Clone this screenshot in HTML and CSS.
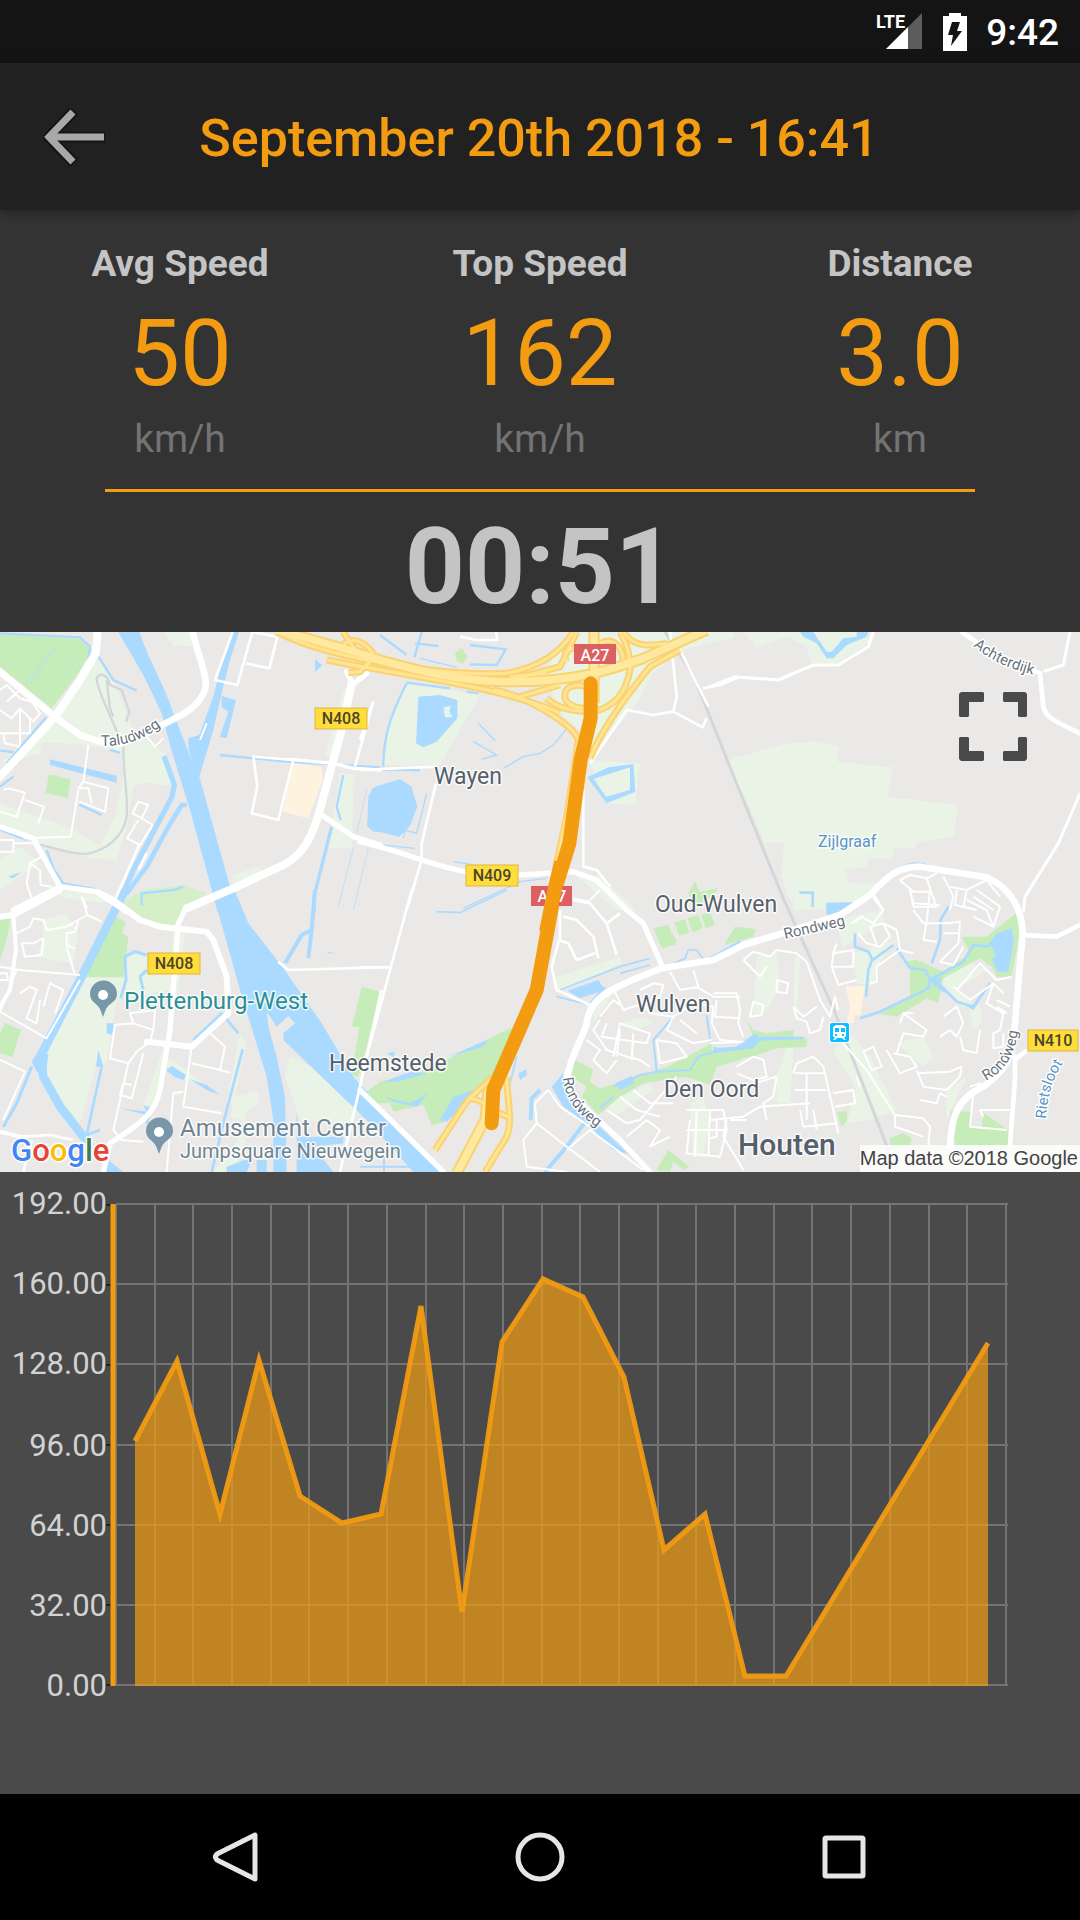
FILE: index.html
```html
<!DOCTYPE html>
<html lang="en">
<head>
<meta charset="utf-8">
<meta name="viewport" content="width=device-width, initial-scale=1">
<title>September 20th 2018 - 16:41</title>
<link rel="stylesheet" href="styles.css">
</head>
<body>
<div class="status-bar">
  <svg class="signal" viewBox="0 0 48 40" role="img" aria-label="LTE signal">
    <path d="M47 1V37H11Z" fill="#5c5c5c"/>
    <path d="M33 15V37H11Z" fill="#fff"/>
    <text class="lte" x="1" y="16">LTE</text>
  </svg>
  <svg class="battery" viewBox="0 0 24 38" role="img" aria-label="Battery charging">
    <path d="M0 3H6V0H18V3H24V38H0Z" fill="#fff"/>
    <path d="M9 9H17L14 18H19L8 33L10 22H5Z" fill="#141414"/>
  </svg>
  <span class="clock">9:42</span>
</div>

<header class="app-bar">
  <button class="back" type="button" aria-label="Back">
    <svg viewBox="0 0 64 64">
      <path d="M31 6L6 32L31 58M7 32H62" fill="none" stroke="#151515" stroke-width="11"/>
      <path d="M30 7L6 32L30 57M7 32H61" fill="none" stroke="#a8a8a8" stroke-width="7"/>
    </svg>
  </button>
  <h1 class="title">September 20th 2018 - 16:41</h1>
</header>

<main class="content">
  <section class="summary">
    <dl class="stats">
      <div class="stat"><dt>Avg Speed</dt><dd class="value">50</dd><dd class="unit">km/h</dd></div>
      <div class="stat"><dt>Top Speed</dt><dd class="value">162</dd><dd class="unit">km/h</dd></div>
      <div class="stat"><dt>Distance</dt><dd class="value">3.0</dd><dd class="unit">km</dd></div>
    </dl>
    <hr class="divider">
    <p class="duration">00:51</p>
  </section>

  <section class="map" aria-label="Route map">
    <svg class="map-canvas" viewBox="0 0 1080 540">
      <defs>
        <path id="p-talud" d="M101 114Q136 115 164 92"/>
        <path id="p-achter" d="M973 14Q998 35 1038 44"/>
        <path id="p-rond1" d="M785 307L850 292"/>
        <path id="p-rond2" d="M563 446C565 466 575 482 604 500"/>
        <path id="p-rond3" d="M986 449C1006 438 1018 422 1019 384"/>
        <path id="p-riet" d="M1046 487C1048 460 1052 444 1070 422"/>
        <g id="ramps" transform="translate(1080 -6)">
          <path d="M-250 6C-60 100 300 140 440 130C540 110 600 70 640 6"/>
          <path d="M-100 90C50 120 250 150 380 180C480 205 560 230 600 250"/>
          <path d="M-50 6C-30 40 -20 60 30 95L0 125L-35 128M-60 60C-40 20 0 20 40 70"/>
          <path d="M400 180C480 190 640 280 655 330L620 560L590 700"/>
          <path d="M450 150L600 110C640 30 640 30 650 6M620 95C600 60 640 40 690 70M480 200L600 165"/>
          <path d="M680 235C640 235 610 220 615 190C620 160 670 160 690 180M560 205C600 240 650 245 700 245C770 230 800 180 810 120C810 70 800 40 780 6M720 40C760 20 790 50 790 100L770 120"/>
          <path d="M690 385C720 310 780 220 870 110L960 60M790 6C820 50 860 50 920 40M450 140L560 130"/>
          <path d="M225 1560L320 1415C360 1375 390 1350 410 1335M375 1626L440 1520C460 1470 440 1400 440 1340M325 1405C370 1405 400 1450 445 1460"/>
        </g>
        <path id="motorway" transform="translate(1080 -6)" d="M-250 0C-100 40 0 70 60 90C200 130 320 155 450 155C650 155 750 120 850 85L1040 0M702 0V220M290 1630L375 1470L385 1380"/>
      </defs>

      <svg x="0" y="0" width="1080" height="540" viewBox="0 0 3240 1620">
        <!-- open green land -->
        <g class="lawn">
          <g transform="translate(0 -6)">
            <path d="M290 80L345 160L400 300L500 375L520 470L435 455L400 470L380 590L350 690L270 685L110 640L0 580V520L210 595L300 645L345 560L370 440L365 365L260 345L130 335L120 372L0 400L160 270Z"/>
            <path d="M490 6H578L582 48H520Z"/>
            <path d="M1030 180H1045L1000 380H975Z"/>
            <path d="M1020 430L1062 432L1055 655L985 655Z"/>
            <path d="M690 760L700 735L780 708L790 730Z"/>
            <path d="M180 780L270 790L340 810L300 820L180 800Z"/>
            <path d="M0 690L60 650L120 700L0 780Z"/>
          </g>
          <g transform="translate(0 774)">
            <path d="M245 262H360L370 200L440 185L440 250L520 250L510 300L350 330L320 520L290 520L240 700L130 560L140 500Z"/>
            <path d="M130 90L195 70L235 120L220 220L110 200L130 150Z"/>
            <path d="M520 120H555L540 260L490 560L450 650L430 650L500 440Z"/>
            <path d="M870 500L1000 560L1080 640L1060 700L900 690L855 560Z"/>
            <path d="M720 430L740 460L700 640L680 640Z"/>
            <path d="M705 620L775 600V640L740 660L720 740L640 846H700L760 700L690 680Z"/>
            <path d="M495 500L560 540L620 590L560 570L500 530Z"/>
          </g>
          <g transform="translate(1080 -6)">
            <path d="M140 160L360 195L240 405H70L90 280Z"/>
            <path d="M560 110L640 6H1110V25L960 60L880 130L830 220L700 380L660 300L590 240Z"/>
            <path d="M685 390L840 400L825 525L740 520Z"/>
            <path d="M1105 390L1140 375V480Z"/>
            <path d="M640 730L720 740L830 840H770Z"/>
          </g>
          <g transform="translate(1080 774)">
            <path d="M580 265L780 200L785 220L640 290L590 300Z"/>
            <path d="M790 400L850 380L880 400L830 420Z"/>
            <path d="M700 360L740 300L760 310L700 400Z"/>
            <path d="M990 640L1030 620L1050 700L1030 800H1000Z"/>
            <path d="M740 640L870 580L880 600L760 680Z"/>
          </g>
          <g transform="translate(2130 -6)">
            <path d="M56 390L220 342L310 335L387 350L382 395L548 412L532 500L742 525L733 622L618 635L616 655H553L545 686H475L472 712L405 718L415 760H510L420 810L240 810L215 740L222 640L165 640Z"/>
            <path d="M100 6H490L470 45L380 100H305L290 50L230 20L140 52Z"/>
            <path d="M0 6H70V25H0Z"/>
          </g>
          <g transform="translate(2130 774)">
            <path d="M250 0H480L400 60L250 60Z"/>
            <path d="M420 430L480 500L560 660L480 690L410 700L440 600L370 480Z"/>
            <path d="M140 200L200 190L210 290L170 360L130 380Z"/>
            <path d="M430 190L560 150L500 230L490 290L440 280Z"/>
            <path d="M200 560L230 470L250 470L240 640H200Z"/>
            <path d="M560 460L640 440L670 500L640 530Z"/>
            <path d="M690 270L760 210L830 240L740 300L790 350L760 350Z"/>
            <path d="M255 200H270L262 370L250 370Z"/>
            <path d="M780 360L810 340L815 400L790 420Z"/>
            <path d="M380 100L430 75L520 60L520 100L400 170Z"/>
            <path d="M710 600L770 560L710 690Z"/>
          </g>
        </g>

        <!-- parks -->
        <g class="park">
          <g transform="translate(0 -6)">
            <path d="M0 10L240 28L275 60L235 130L155 235L0 110Z"/>
            <path d="M147 433L212 448L203 504L136 488Z"/>
          </g>
          <g transform="translate(0 774)">
            <path class="pale" d="M360 40L430 0L550 -15L620 10L560 50L530 110L450 100Z"/>
            <path d="M345 80L378 95L365 130L385 140L370 262H245Z"/>
            <path d="M0 85H32L20 150L0 210Z"/>
            <path d="M15 398L63 420L37 502L0 490V430Z"/>
            <path d="M1085 290L1144 305L1075 560L1055 555L1078 410H1055Z"/>
          </g>
          <g transform="translate(1080 -6)">
            <path d="M285 70L305 55L322 78L308 102L290 92Z"/>
            <path d="M985 790L1005 752L1020 785L1075 775L1055 800L1000 830Z"/>
          </g>
          <g transform="translate(1080 774)">
            <path d="M20 605L60 575L200 540L450 415L480 410L420 560L360 590L260 690L245 700L215 705L190 645L100 665L90 640L50 640Z"/>
            <path d="M645 510L700 540L690 575L720 595L800 570L920 530L1000 490L1055 460V480L1140 490V510L1070 530L1050 585L980 560L850 580L780 620L715 675L665 620L680 590L635 560Z"/>
            <path d="M880 115L925 105L935 130L950 150L945 165L905 175Z"/>
            <path d="M943 98L975 88L988 128L958 138ZM983 85L1015 75L1028 115L998 128ZM1022 75L1050 65L1064 105L1038 115Z"/>
            <path d="M1095 165L1130 110L1160 115L1186 120L1180 140Z"/>
            <path d="M890 840L925 780L988 830L970 840L940 815L930 845Z"/>
          </g>
          <g transform="translate(2130 774)">
            <path d="M0 500L60 480L130 440L110 390L130 420L165 430L250 420L250 440L290 445V470L200 475L130 500L0 520Z"/>
            <path d="M45 160L75 110L138 118L130 138Z"/>
            <path d="M755 140L830 140L918 70L930 130L905 260H860L845 230L810 205L700 265L685 340L650 325L560 380L510 372L600 320L600 240L585 215L620 210L700 245L780 190Z"/>
            <path d="M722 662L785 665L783 710L815 715L820 670L815 665L895 720V766H740L722 735Z"/>
            <path d="M540 745L580 728L605 745L600 766H540Z"/>
            <path d="M380 668L410 662L412 690L395 710Z"/>
          </g>
        </g>

        <g class="sand">
          <path transform="translate(0 -6)" d="M880 398L965 412L968 450L925 565L848 545Z"/>
          <path transform="translate(2130 774)" d="M407 290L465 288L452 375L432 375V400H410L420 350Z"/>
        </g>

        <!-- water -->
        <g class="water">
          <g transform="translate(0 -6)">
            <path d="M355 6H418C450 100 500 180 520 250L575 390L598 440L690 770L728 845H652L630 760L570 540L545 460L510 345L485 250L430 135Z"/>
            <path d="M698 6H717L690 90L665 190L640 300L610 400L598 440L575 390L565 350L600 310L640 200L665 100Z"/>
            <path d="M665 198L708 210L680 325L660 320L685 245L665 230ZM565 325L600 315L590 345L565 345Z"/>
            <path d="M945 88L967 106L945 126Z"/>
            <path d="M150 388L350 437V458L150 405Z"/>
            <path d="M1105 500L1118 475L1140 470V605L1120 605L1102 588Z"/>
            <path d="M25 740L65 725L40 745Z"/>
          </g>
          <g transform="translate(0 774)">
            <path d="M636 0H704L745 100L850 235L965 400L1060 560L1320 846H1240L1110 700L850 450V430L885 400L865 378L830 410L800 365L805 410L830 500L855 620L860 846H820V690L800 560L720 300Z"/>
            <path d="M95 515L120 475L145 495L138 550L110 545Z"/>
            <path d="M320 400H345L335 435L320 430ZM295 480L310 530H288Z"/>
            <path d="M498 540L515 528L558 555L550 570L525 562ZM570 568L620 585L660 615L620 600Z"/>
            <path d="M320 806L370 846H310ZM890 670L900 740L1030 740V760L940 770L1000 846H890ZM680 830L760 800L740 846H680ZM770 810H800V846H770Z"/>
            <path d="M360 655L440 665L430 645L455 655L440 675Z"/>
            <path d="M980 185L1010 190L985 190Z"/>
          </g>
          <g transform="translate(1080 -6)">
            <path fill-rule="evenodd" d="M175 200L240 195L292 210V265L230 335L190 352L168 340ZM250 232L272 228L268 245L278 262L255 262Z"/>
            <path d="M28 500L45 470L120 448L155 470L172 530L150 588L118 620L35 600L22 585Z"/>
            <path fill-rule="evenodd" d="M682 442L745 412L820 402L826 485L740 520ZM700 447L738 500L810 480V412Z"/>
          </g>
          <g transform="translate(1080 774)">
            <path d="M622 302L715 270L735 300L660 325Z"/>
            <path d="M765 580L815 558L822 580L780 600Z"/>
            <path d="M575 590L610 550L650 650L730 720L805 792L760 780L690 710L610 650Z"/>
            <path d="M475 550L500 538V555L480 570Z"/>
            <path d="M265 500L385 448L370 470ZM70 575L150 545L200 552L110 575ZM75 620L150 640L205 610L170 650L100 635ZM240 690L280 620L370 590L260 695Z"/>
            <path d="M1060 470L1110 480L1065 490Z"/>
            <path d="M80 490L105 485L100 502Z"/>
          </g>
          <g transform="translate(2130 774)">
            <path d="M348 38L460 35L390 75H350Z"/>
            <path d="M838 160L860 130L905 115L912 150L895 245L862 245L845 205L860 200Z"/>
            <path d="M10 475L80 470L135 430L145 440L280 440V448L150 452L130 475L10 490ZM755 340L785 345L808 335L790 360Z"/>
            <path d="M655 270L695 262L690 280L730 320L690 300Z"/>
          </g>
          <path transform="translate(2130 -6)" d="M270 6H310L350 65H365L400 25L440 20V6H475L470 20L410 45L370 85H350L320 40L280 20Z"/>
        </g>

        <!-- canals and ditches -->
        <g class="stream">
          <g transform="translate(0 -6)">
            <path stroke-width="16" d="M492 378L523 465L516 500L400 720L345 845"/>
            <path stroke-width="14" d="M560 525H545L505 590L440 710L380 790"/>
            <path stroke-width="7" d="M0 10L240 22L270 50L265 90M295 80L340 150L410 182M138 262L20 400M0 362L40 366M0 470L40 440M330 360L360 368M238 524L305 555M140 660L160 715L190 760L290 778M425 825V790L520 780L550 770M660 375L860 395L1140 412M1030 435L1010 530L1022 570"/>
            <path stroke-width="10" d="M995 590L942 800V845"/>
            <path stroke-width="2" d="M75 160L155 60M90 160L180 40M205 95L235 125M1060 655L1015 830M1105 655L1060 840M1100 480L1070 610"/>
            <path stroke-width="6" d="M0 600L80 630"/>
          </g>
          <g transform="translate(0 774)">
            <path stroke-width="26" d="M375 0L345 60L240 270L120 500L130 560L180 650L250 740L265 750"/>
            <path stroke-width="9" d="M95 530L50 640L10 710M375 200L405 185L440 195M375 200L378 270L362 325M440 240L420 260L430 300"/>
            <path stroke-width="12" d="M945 0L935 120L905 135L855 220M935 120L925 205"/>
            <path stroke-width="8" d="M580 450L665 370L715 430M728 478L675 680L635 846M305 530L260 735L300 720M440 700L455 650"/>
          </g>
          <g transform="translate(1080 -6)">
            <path stroke-width="7" d="M60 15L140 75M185 6L163 82M165 40L235 48M330 103L410 105L437 58L330 45M140 158L270 175M320 185L355 190M140 160C90 260 70 320 70 410M0 418L180 420"/>
            <path stroke-width="4" d="M355 280L405 332M340 335L410 375L365 388M430 415L490 380L540 370L580 345L625 290M180 85L290 112M200 490L170 610L135 600L130 625M20 640L165 655M280 695L330 702M310 835L480 755L560 745"/>
          </g>
          <g transform="translate(1080 774)">
            <path stroke-width="5" d="M230 65L300 68L440 0M470 500L440 620M590 320L690 345M600 300L780 230L870 205M780 250L870 225M930 225L975 205L985 180H1010L1030 208M735 290L690 340M690 390L620 530"/>
            <path stroke-width="6" d="M940 380L880 450L890 545L840 555L760 590M890 545L990 540L1015 500L1080 480M1040 375L1052 460M720 655L760 620M0 830H160M72 800V846"/>
            <path stroke-width="12" d="M540 600L515 625L512 690M680 690L620 770L555 846"/>
          </g>
          <g transform="translate(2130 774)">
            <path stroke-width="8" d="M435 130V170L475 185L488 210L550 165M488 205L475 240L468 320M715 50L692 90L690 150L665 220M560 175L600 235L645 240L660 270L760 215L790 165L830 170L900 120M660 270L655 295L510 365L450 385M695 290L740 335L790 350L840 280M268 8H308V50M0 205L90 155"/>
          </g>
          <path transform="translate(2130 -6)" stroke-width="9" d="M480 790L550 725C590 700 620 695 660 710"/>
        </g>

        <!-- railway -->
        <g class="rail">
          <path transform="translate(0 -6)" d="M357 320C330 250 290 180 290 145C300 125 325 135 330 165L365 180L388 245L378 275M320 150L330 235L340 260M370 350C370 440 385 500 380 560C370 620 320 660 260 672C200 672 160 650 100 640"/>
          <path stroke-width="9" d="M1995 0L2080 130L2220 480L2350 800L2500 1130L2660 1540L2690 1620"/>
        </g>

        <!-- local streets -->
        <g class="street">
          <g transform="translate(0 -6)">
            <path d="M0 180L20 165L60 205L95 215L120 250L100 275L60 235L35 265L0 240M20 215L60 180M60 235V345M90 265V310H0M10 310L15 340L60 350M265 345L250 455L235 475H265L275 520M250 455L325 475L315 545L238 515M235 480L212 620M10 480L25 475L75 488L50 560L0 545M75 510L132 530L115 580M415 515L445 525L425 565L398 550ZM425 565L458 585L420 645L382 625L415 570M440 320L465 350L490 325M620 280L600 330M0 630H40V665H0M40 640L100 640L125 680L90 700L80 760L100 820M90 700L120 720L122 765L155 770"/>
            <path stroke-width="8" d="M698 6L645 150L712 165L757 6L832 20L808 115L738 100M880 390L835 570L755 550L772 470L760 380L880 390M1120 215L1065 410M420 640L345 810M415 720L440 670"/>
            <path d="M70 625L210 620M245 800L262 835"/>
          </g>
          <g transform="translate(0 774)">
            <path d="M48 130L90 110L100 85L130 90L140 120L200 110L235 90L262 75M235 95L225 125L200 130V165L225 175M200 170L225 255M65 160H100L130 145L125 195L75 200ZM0 230L60 240L240 255M50 240L0 365L140 445L240 270M60 310L90 290L110 300L80 385L110 400L120 330M130 350L150 280L190 300L165 370M245 20L262 75L305 95M0 510L75 545L10 690M0 250H20L25 270H0"/>
            <path d="M340 405L400 400L460 420L450 455L410 485L385 520L330 505L345 405M400 400L390 370L465 360L460 420M450 455H500M430 490L395 625L360 615L370 580L395 585M385 520L340 720L365 750L430 755M630 430L675 470L660 540L690 548M575 520L660 540M575 470L550 650L665 670M550 605L520 610L500 846"/>
            <path stroke-width="8" d="M835 215L865 240L1140 232M1144 300L1080 590L1020 846M0 725L60 740L150 735L220 750M95 750L70 846"/>
          </g>
          <g transform="translate(1080 -6)">
            <path stroke-width="8" d="M228 410L0 420M228 460L185 640V690L140 840M670 480V710L710 720L750 770M350 30H412L408 6M300 20L350 30M40 215L0 330M690 400L800 240L880 255L940 245L1028 292L1040 265M930 6L950 200L940 245M960 60L1045 230M1028 175L1080 165L1140 140"/>
            <path d="M640 805L685 815L720 780M670 480L665 350"/>
          </g>
          <g transform="translate(1080 774)">
            <path stroke-width="8" d="M155 0L20 500L0 590M0 232H90M600 60V140L575 230L590 300L690 345M610 80L650 90L700 140L715 205M595 150L625 160L650 210L705 190M640 30L690 40L740 100L770 195M740 100L780 70"/>
            <path d="M765 305L790 360L850 340M720 380L760 330L780 345M840 300L880 280L910 285L900 320L850 340L870 370L940 380L1000 340M720 390L700 420L740 480L800 500L840 510L870 530M740 400L725 440L860 460L870 430L780 400L760 500M680 450L720 480L700 510L740 550L770 510M780 420L770 500M820 430L815 510M940 380L920 420L1000 460L1055 450M960 390L1010 430M890 450L900 520L980 500L950 460L890 450M1000 340L1060 350L1055 400L1080 450L1140 455M930 245L960 300L1015 290L1000 240M1010 290L1060 320H1140M740 660L800 700L840 690L950 560M780 620L830 660L900 680M820 600L870 640L940 640M800 740L860 690L900 720L870 770L930 740M980 660H1090L1100 720L1080 800L980 790L990 690M1010 660L1005 800M1050 660L1045 800M980 720H1100M1110 690L1160 690M565 600L525 640L530 700L490 750L500 830L620 846M565 600L600 650L690 710M620 770L530 700M620 770L720 846M620 780L690 720L850 840"/>
          </g>
          <g transform="translate(2130 -6)">
            <path stroke-width="9" d="M0 170L75 140L205 150L310 105H385L475 50L490 6M1080 6L1060 105L1000 125M1110 490L1080 560L1045 640L945 800L940 845M490 800L520 840"/>
            <path d="M570 750L600 735L650 745L665 790L680 830M570 750L610 785H660M600 780L610 830H680M650 745L680 730M700 740L730 800L720 840M720 770L770 780L830 750M770 780L760 830M790 800L850 840M830 750L870 800"/>
          </g>
          <g transform="translate(2130 774)">
            <path d="M600 0L610 40L690 45M660 0L650 95M610 60L640 100H715L750 95L745 160L690 215L730 225L760 170M700 130H750M650 95L640 150L680 155M770 30L830 60L850 110M800 0L870 50L850 110L790 80M740 0L735 45L800 60M425 100L455 80L490 100L520 60L490 10M445 130L470 160L510 170L540 140L520 100L480 110L500 165M520 100L560 120L570 180L610 190M570 180L500 230V275L480 280M370 190L430 180V230L365 230ZM365 230L385 285L440 270M380 160L370 190M100 210L130 185L180 200L200 180L260 190L290 215L330 330L360 380L375 320L385 360M100 210L130 240L150 260L170 230M200 270L235 280L230 310L200 305ZM10 310L80 310L90 360L85 400L100 440M20 330L15 380L90 385M130 335L160 345L155 375L120 380ZM0 460L100 455M250 350L280 380L320 350M250 350L260 385L290 395L300 430L330 420L340 380"/>
            <path d="M80 530L130 500L160 510L170 560L130 570L80 550M100 590L200 560M0 690L100 680L150 650L300 640M20 690V740L0 745M50 690L40 740L100 840M250 550L260 520L310 500L340 530L365 640L385 730M255 550H340M255 600H350M290 550V690M370 610L430 600L435 640L375 650M200 560L190 620L160 640L170 690M270 660L280 710L380 700M310 660L320 720M450 590L440 560"/>
            <path d="M460 485L490 470L515 530L485 540ZM400 460L470 540L520 620L555 675L640 685L660 710L655 766M555 675V710L640 740M530 480L570 550L620 530L600 500L550 490M560 490L580 430L640 440L650 420L580 370L570 400M580 370L610 370M620 540L640 590L710 600L750 560L755 530L720 545L620 550M700 380L740 350L760 400L740 440L720 420L690 440M750 440L760 480L800 490L810 420M740 300L810 220L860 270L905 260M730 290L780 330L850 280L880 310M850 280L830 340L880 370L870 420L850 430V475L880 470V430M860 330L900 350M860 350L890 370M790 610L780 710L890 720M790 610L810 580L780 590M820 680L810 660H900M630 630L680 640L690 610L710 620"/>
          </g>
        </g>

        <!-- main roads -->
        <g class="road">
          <g transform="translate(0 -6)">
            <path stroke-width="24" d="M293 6L287 70L240 150L165 260L0 440"/>
            <path stroke-width="20" d="M0 125L170 265L240 315L300 335L360 340L440 310L530 262C590 235 620 190 617 155C612 110 590 60 578 6"/>
            <path stroke-width="24" d="M1055 160L1030 280L965 520C940 620 910 670 860 700L700 775L560 835"/>
            <path stroke-width="16" d="M1040 125L1058 165L1100 130M965 555L1060 620L1140 645M0 590L100 625L180 770L290 785L380 845M180 770L40 840"/>
            <path stroke-width="10" d="M870 388L1000 400L1060 415L1140 420"/>
          </g>
          <g transform="translate(0 774)">
            <path stroke-width="18" d="M0 80L40 75L180 0M290 5L340 30L420 90L480 110L620 125L640 150L680 260L685 370L575 470L440 455"/>
            <path stroke-width="16" d="M560 50L535 100L510 420L480 600C460 680 420 700 330 760L310 846"/>
            <path stroke-width="12" d="M40 75L48 180L30 300L0 350M0 725L60 740"/>
          </g>
          <path transform="translate(1080 -6)" stroke-width="16" d="M0 635C150 670 240 720 400 740L640 725L710 750L800 840L850 880L905 1005"/>
          <path transform="translate(1080 774)" stroke-width="20" d="M620 560C640 480 670 440 680 400C690 330 730 300 905 235L1060 210L1150 165L1350 105L1440 75L1530 15C1590 -50 1620 -70 1680 -70L1880 -38C1940 -10 1985 40 1988 130L1965 400C1960 500 1940 540 1870 590C1780 630 1775 700 1770 766"/>
          <path transform="translate(1080 774)" stroke-width="16" d="M620 560L640 620L780 750L870 846M0 600L250 846"/>
          <g transform="translate(2130 774)">
            <path stroke-width="14" d="M935 135L1040 140L1110 105M915 500V570L900 766M945 485L915 510"/>
          </g>
          <path transform="translate(2130 -6)" stroke-width="14" d="M755 6L850 70L990 130L1000 230C1010 270 1050 280 1110 310"/>
        </g>

        <!-- motorways: casing first, then the filling -->
        <use class="ramp-casing" href="#ramps"/>
        <use class="motorway-casing" href="#motorway"/>
        <use class="ramp" href="#ramps"/>
        <use class="motorway" href="#motorway"/>

        <path class="route" d="M1772 154V259L1742 384L1708 634L1665 774L1610 1074L1480 1374L1475 1474"/>
      </svg>

      <!-- road number shields -->
      <g class="shield">
        <rect x="315" y="76" width="52" height="21"/><text x="341" y="92">N408</text>
        <rect x="466" y="233" width="52" height="21"/><text x="492" y="249">N409</text>
        <rect x="148" y="321" width="52" height="21"/><text x="174" y="337">N408</text>
        <rect x="1028" y="398" width="50" height="21"/><text x="1053" y="414">N410</text>
      </g>
      <g class="shield red">
        <rect x="574" y="12" width="42" height="20"/><text x="595" y="29">A27</text>
        <rect x="531" y="254" width="41" height="20"/><text x="552" y="270">A27</text>
      </g>
      <path class="route-top" d="M561 230L555 256L546 300"/>

      <!-- places -->
      <g class="place">
        <text x="434" y="152">Wayen</text>
        <text x="655" y="280">Oud-Wulven</text>
        <text x="636" y="380">Wulven</text>
        <text x="329" y="439">Heemstede</text>
        <text x="664" y="465">Den Oord</text>
      </g>
      <text class="place town" x="738" y="523">Houten</text>
      <text class="place business" x="124" y="377">Plettenburg-West</text>
      <text class="place venue" x="180" y="504">Amusement Center</text>
      <text class="place venue small" x="180" y="526">Jumpsquare Nieuwegein</text>
      <g class="street-name">
        <text><textPath href="#p-talud">Taludweg</textPath></text>
        <text><textPath href="#p-achter">Achterdijk</textPath></text>
        <text><textPath href="#p-rond1">Rondweg</textPath></text>
        <text><textPath href="#p-rond2">Rondweg</textPath></text>
        <text><textPath href="#p-rond3">Rondweg</textPath></text>
        <text class="blue"><textPath href="#p-riet">Rietsloot</textPath></text>
      </g>
      <text class="place blue zijl" x="818" y="215">Zijlgraaf</text>

      <g class="pin">
        <path d="M103 385L100 377C97 371 90 370 90 362A13 13 0 0 1 117 362C117 370 109 371 106 377Z"/><circle cx="103" cy="363" r="5"/>
        <path d="M159 522L156 514C153 508 146 507 146 499A13 13 0 0 1 173 499C173 507 165 508 162 514Z"/><circle cx="159" cy="500" r="5"/>
      </g>
      <g>
        <rect x="829" y="390" width="21" height="21" rx="2" fill="#fff"/>
        <rect x="830" y="391" width="19" height="19" rx="2" fill="#10bdff"/>
        <path fill="#fff" fill-rule="evenodd" d="M836 393H843L846 395V404L844 406L846 408H844L842 406H837L835 408H833L835 406L833 404V395ZM835 396V400H839V396ZM841 396V400H845V396ZM835 402V404H837V402ZM842 402V404H844V402Z"/>
      </g>

      <text class="google" x="11" y="529"><tspan fill="#4285f4">G</tspan><tspan fill="#ea4335">o</tspan><tspan fill="#fbbc05">o</tspan><tspan fill="#4285f4">g</tspan><tspan fill="#3f7d57">l</tspan><tspan fill="#ea4335">e</tspan></text>
      <rect x="860" y="513" width="220" height="27" fill="#fff" fill-opacity=".8"/>
      <text class="attribution" x="1078" y="533">Map data ©2018 Google</text>
    </svg>
    <button class="fullscreen" type="button" aria-label="Show map full screen">
      <svg viewBox="0 0 68 69"><path d="M2 0H24L25 1V9L24 10H10V24L9 25H1L0 24V2ZM45 0H66L68 2V24L67 25H60L59 24V10H45L44 9V1ZM0 46L1 45H9L10 46V59H24L25 60V68L24 69H2L0 67ZM59 46L60 45H67L68 46V67L66 69H45L44 68V60L45 59H59Z"/></svg>
    </button>
  </section>

  <section class="chart" aria-label="Speed over time">
    <svg class="chart-canvas" viewBox="0 0 1080 622">
      <path class="grid" d="M116 32H1008M116 112H1008M116 192H1008M116 273H1008M116 353H1008M116 433H1008M116 513H1008M116 32V514M155 32V514M193 32V514M232 32V514M271 32V514M309 32V514M348 32V514M387 32V514M426 32V514M464 32V514M503 32V514M542 32V514M580 32V514M619 32V514M658 32V514M696 32V514M735 32V514M774 32V514M812 32V514M851 32V514M890 32V514M929 32V514M967 32V514M1006 32V514"/>
      <path class="ticks" d="M106 33H112M106 113H112M106 193H112M106 273H112M106 353H112M106 433H112M106 513H112"/>
      <path class="area" d="M135 269L177 189L220 342L259 188L300 324L342 351L381 342L421 134L462 440L502 170L543 107L583 125L624 205L664 378L705 342L745 504H786L988 171V514H135Z"/>
      <path class="line" d="M135 269L177 189L220 342L259 188L300 324L342 351L381 342L421 134L462 440L502 170L543 107L583 125L624 205L664 378L705 342L745 504H786L988 171"/>
      <path class="axis" d="M113 32V514"/>
      <g class="axis-labels">
        <text x="107" y="42">192.00</text>
        <text x="107" y="122">160.00</text>
        <text x="107" y="202">128.00</text>
        <text x="107" y="284">96.00</text>
        <text x="107" y="364">64.00</text>
        <text x="107" y="444">32.00</text>
        <text x="107" y="524">0.00</text>
      </g>
    </svg>
  </section>
</main>

<nav class="nav-bar" aria-label="System">
  <button type="button" aria-label="Back"><svg viewBox="0 0 54 54"><path d="M46 5V49L8 30Q5 27 8 24Z"/></svg></button>
  <button type="button" aria-label="Home"><svg viewBox="0 0 54 54"><circle cx="27" cy="27" r="22"/></svg></button>
  <button type="button" aria-label="Overview"><svg viewBox="0 0 54 54"><rect x="8" y="8" width="38" height="38" rx="1"/></svg></button>
</nav>
</body>
</html>
```
FILE: styles.css
```css
* {
  box-sizing: border-box;
}

body {
  margin: 0;
  min-height: 100vh;
  display: flex;
  flex-direction: column;
  background: #4a4a4a;
  font-family: Roboto, "Liberation Sans", sans-serif;
}

button {
  margin: 0;
  padding: 0;
  border: 0;
  background: none;
  cursor: pointer;
}

svg {
  display: block;
}

.status-bar {
  display: flex;
  justify-content: flex-end;
  align-items: center;
  height: 63px;
  padding-right: 21px;
  background: #141414;
  color: #fff;
}

.signal {
  width: 48px;
  height: 40px;
}

.lte {
  font: bold 18px "Liberation Sans Narrow", Roboto, sans-serif;
  fill: #fff;
}

.battery {
  width: 24px;
  height: 38px;
  margin: 0 19px 0 20px;
}

.clock {
  padding-top: 3px;
  font-size: 37px;
  font-weight: 500;
  line-height: 44px;
}

.app-bar {
  position: relative;
  display: grid;
  grid-template-columns: 107px 1fr 109px;
  align-items: center;
  height: 147px;
  background: #212121;
  box-shadow: 0 2px 10px rgba(0, 0, 0, .4);
}

.back {
  justify-self: end;
}

.back svg {
  width: 64px;
  height: 64px;
}

.title {
  margin: 0;
  padding-top: 4px;
  font-size: 52px;
  font-weight: 500;
  line-height: 62px;
  text-align: center;
  color: #f39c12;
}

.content {
  flex: 1;
  display: flex;
  flex-direction: column;
}

.summary {
  padding: 32px 0 2px;
  background: #333;
  text-align: center;
}

.stats {
  display: grid;
  grid-template-columns: repeat(3, 1fr);
  margin: 0;
}

.stat dt {
  font-size: 37px;
  font-weight: 700;
  line-height: 44px;
  color: #c4c4c4;
}

.stat dd {
  margin: 0;
}

.stat .value {
  margin-top: 14px;
  font-size: 92px;
  line-height: 108px;
  color: #f39c12;
}

.stat .unit {
  margin-top: 8px;
  font-size: 39px;
  line-height: 46px;
  color: #737373;
}

.divider {
  width: 870px;
  max-width: 90%;
  height: 3px;
  margin: 27px auto 14px;
  border: 0;
  background: #f39c12;
}

.duration {
  margin: 0;
  font-size: 105px;
  font-weight: 700;
  line-height: 124px;
  color: #c4c4c4;
}

.map {
  position: relative;
  background: #eae9e7;
}

.map-canvas {
  width: 100%;
  height: auto;
}

.lawn { fill: #e9f4e6; }
.park { fill: #c6edb9; }
.park .pale { fill: #d5f0c9; }
.sand { fill: #fef3de; }
.water { fill: #aadaff; }
.stream { fill: none; stroke: #aadaff; }
.rail { fill: none; stroke: #d3d7da; stroke-width: 7; }
.street { fill: none; stroke: #fff; stroke-width: 6; stroke-linejoin: round; }
.road { fill: none; stroke: #fff; stroke-linejoin: round; stroke-linecap: round; }
.ramp-casing { fill: none; stroke: #fad272; stroke-width: 21; }
.motorway-casing { fill: none; stroke: #fad272; stroke-width: 34; }
.ramp { fill: none; stroke: #ffe592; stroke-width: 9; }
.motorway { fill: none; stroke: #ffe99f; stroke-width: 22; }
.route { fill: none; stroke: #f39c12; stroke-width: 42; stroke-linecap: round; stroke-linejoin: round; }
.route-top { fill: none; stroke: #f39c12; stroke-width: 14; }

.shield rect { fill: #ffde3b; stroke: #dfb640; }
.shield text { font-size: 16px; font-weight: 500; text-anchor: middle; fill: #4b4429; }
.shield.red rect { fill: #dc5f61; stroke: none; }
.shield.red text { fill: #fff; }

.place {
  font-size: 23px;
  fill: #55606c;
  stroke: #fff;
  stroke-width: 3px;
  stroke-opacity: .8;
  stroke-linejoin: round;
  paint-order: stroke;
}

.town { font-size: 30px; font-weight: 500; }
.business { font-size: 24px; fill: #2b8f95; }
.venue { font-size: 24px; fill: #6f8491; }
.small { font-size: 20px; }
.zijl { font-size: 16px; }

.street-name {
  font-size: 15px;
  fill: #66717b;
  stroke: #fff;
  stroke-width: 3px;
  stroke-linejoin: round;
  paint-order: stroke;
}

.blue, .street-name .blue { fill: #5b94c8; }
.pin path { fill: #7898aa; }
.pin circle { fill: #fff; }

.google {
  font-size: 31px;
  font-weight: 500;
  stroke: #fff;
  stroke-width: 3px;
  paint-order: stroke;
}

.attribution {
  font: 20px "Liberation Sans", sans-serif;
  text-anchor: end;
  fill: #444;
}

.fullscreen {
  position: absolute;
  top: 60px;
  right: 53px;
}

.fullscreen svg {
  width: 68px;
  height: 69px;
  fill: #4a4a4a;
}

.chart {
  flex: 1;
  background: #4a4a4a;
}

.chart-canvas {
  width: 100%;
  height: auto;
}

.grid { fill: none; stroke: #747474; stroke-width: 2; }
.ticks { fill: none; stroke: #000; }
.area { fill: #f39c12; fill-opacity: .7; }
.line { fill: none; stroke: #f39c12; stroke-width: 5; stroke-opacity: .93; }
.axis { fill: none; stroke: #f39c12; stroke-width: 5; }
.axis-labels { font-size: 31px; text-anchor: end; fill: #d2d2d2; }

.nav-bar {
  display: grid;
  grid-template-columns: repeat(3, minmax(0, 304px));
  justify-content: center;
  align-items: center;
  height: 126px;
  background: #000;
}

.nav-bar button {
  justify-self: center;
}

.nav-bar svg {
  width: 54px;
  height: 54px;
  fill: none;
  stroke: #e6e6e6;
  stroke-width: 5;
  stroke-linejoin: round;
}
```
